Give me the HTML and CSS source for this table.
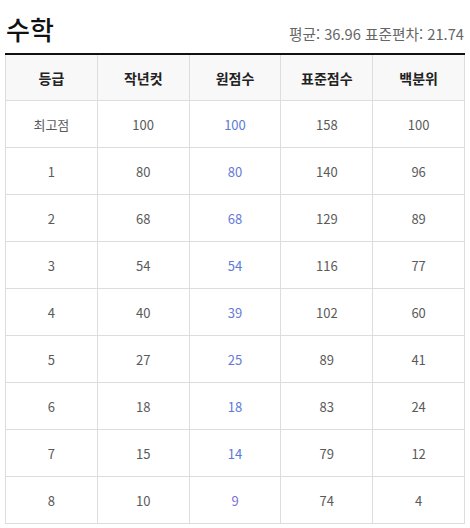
FILE: index.html
```html
<!DOCTYPE html>
<html lang="ko">
<head>
<meta charset="utf-8">
<link rel="stylesheet" href="styles.css">
</head>
<body>
<div class="page">
  <div class="head">
    <h1 class="title">수학</h1>
    <div class="stats">평균: 36.96 표준편차: 21.74</div>
  </div>
  <table class="grade">
    <thead>
      <tr><th>등급</th><th>작년컷</th><th>원점수</th><th>표준점수</th><th>백분위</th></tr>
    </thead>
    <tbody>
      <tr><td>최고점</td><td>100</td><td class="raw">100</td><td>158</td><td>100</td></tr>
      <tr><td>1</td><td>80</td><td class="raw r2">80</td><td>140</td><td>96</td></tr>
      <tr><td>2</td><td>68</td><td class="raw r2">68</td><td>129</td><td>89</td></tr>
      <tr><td>3</td><td>54</td><td class="raw">54</td><td>116</td><td>77</td></tr>
      <tr><td>4</td><td>40</td><td class="raw r2">39</td><td>102</td><td>60</td></tr>
      <tr><td>5</td><td>27</td><td class="raw r2">25</td><td>89</td><td>41</td></tr>
      <tr><td>6</td><td>18</td><td class="raw">18</td><td>83</td><td>24</td></tr>
      <tr><td>7</td><td>15</td><td class="raw">14</td><td>79</td><td>12</td></tr>
      <tr><td>8</td><td>10</td><td class="raw r3">9</td><td>74</td><td>4</td></tr>
    </tbody>
  </table>
</div>
</body>
</html>
```
FILE: styles.css
```css
html, body {
  margin: 0;
  padding: 0;
  background: #fff;
}
body {
  font-family: "Noto Sans CJK KR", "Noto Sans", sans-serif;
  color: #555;
}
.page {
  padding: 0 5px;
}
.head {
  display: flex;
  justify-content: space-between;
  align-items: flex-end;
  height: 44px;
  padding-bottom: 9px;
  box-sizing: content-box;
}
.title {
  margin: 0 0 0 1px;
  font-size: 26px;
  font-weight: 500;
  line-height: 30px;
  color: #111;
}
.stats {
  font-size: 14.7px;
  line-height: 18px;
  color: #666;
  margin-bottom: 1px;
  margin-right: 1px;
}
.grade {
  width: 460px;
  border-collapse: collapse;
  table-layout: fixed;
  border-top: 2px solid #111;
}
.grade th, .grade td {
  border: 1px solid #ddd;
  text-align: center;
  padding: 0;
}
.grade th {
  background: #f8f8f8;
  font-size: 14px;
  font-weight: 700;
  color: #222;
  height: 45px;
}
.grade td {
  font-size: 13px;
  color: #5a5a5a;
  height: 46px;
}
.grade td.raw {
  color: #5b7bd6;
}
.grade td.r2 {
  color: #667ad6;
}
.grade td.r3 {
  color: #7a70d2;
}
```
